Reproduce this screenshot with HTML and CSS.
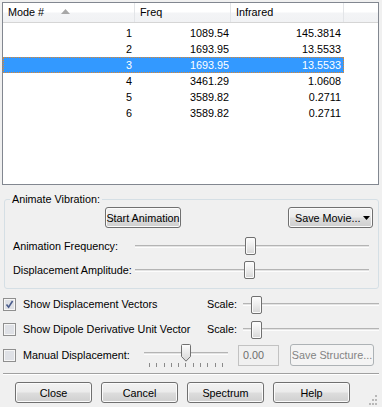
FILE: index.html
```html
<!DOCTYPE html>
<html lang="en">
<head>
    <meta charset="UTF-8">
    <title>Vibrations</title>
    <link rel="stylesheet" href="styles.css">
</head>
<body>
    <div class="dialog">
        <!-- Mode list -->
        <div class="list">
            <div class="list-head">
                <div class="head-cell c1">Mode # <svg class="sort" width="9" height="5" viewBox="0 0 9 5"><polygon points="0,5 9,5 4.5,0" fill="#a7a7a7"/></svg></div>
                <div class="head-cell c2">Freq</div>
                <div class="head-cell c3">Infrared</div>
                <div class="head-cell filler"></div>
            </div>
            <div class="list-body" id="mode-list"></div>
        </div>

        <!-- Animation group -->
        <fieldset class="group">
            <legend>Animate Vibration:</legend>
            <div class="anim-buttons">
                <button class="btn start-btn">Start Animation</button>
                <button class="btn movie-btn">Save Movie...<svg class="drop" width="7" height="4" viewBox="0 0 7 4"><polygon points="0,0 7,0 3.5,4" fill="#000"/></svg></button>
            </div>
            <div class="slider-row">
                <span class="slider-label">Animation Frequency:</span>
                <div class="slider">
                    <div class="track"></div>
                    <div class="thumb" style="left:110px"></div>
                </div>
            </div>
            <div class="slider-row">
                <span class="slider-label">Displacement Amplitude:</span>
                <div class="slider">
                    <div class="track"></div>
                    <div class="thumb" style="left:109px"></div>
                </div>
            </div>
        </fieldset>

        <!-- Display options -->
        <div class="options">
            <div class="opt-row">
                <svg class="check" width="13" height="13" viewBox="0 0 13 13">
                    <rect x="0.5" y="0.5" width="12" height="12" fill="#f6f6f6" stroke="#8f8f8f"/>
                    <rect x="2" y="2" width="9" height="9" fill="#dfe1e6"/>
                    <path d="M3.5 6.5 L5.6 9.2 L9.6 3" fill="none" stroke="#4a5c8c" stroke-width="1.6"/>
                </svg>
                <span class="opt-label">Show Displacement Vectors</span>
                <span class="scale-label">Scale:</span>
                <div class="slider scale">
                    <div class="track"></div>
                    <div class="thumb" style="left:8px"></div>
                </div>
            </div>
            <div class="opt-row">
                <svg class="check" width="13" height="13" viewBox="0 0 13 13">
                    <rect x="0.5" y="0.5" width="12" height="12" fill="#f6f6f6" stroke="#8f8f8f"/>
                    <rect x="2" y="2" width="9" height="9" fill="#dfe1e6"/>
                </svg>
                <span class="opt-label">Show Dipole Derivative Unit Vector</span>
                <span class="scale-label">Scale:</span>
                <div class="slider scale">
                    <div class="track"></div>
                    <div class="thumb" style="left:8px"></div>
                </div>
            </div>
            <div class="opt-row manual-row">
                <svg class="check" width="13" height="13" viewBox="0 0 13 13">
                    <rect x="0.5" y="0.5" width="12" height="12" fill="#f6f6f6" stroke="#8f8f8f"/>
                    <rect x="2" y="2" width="9" height="9" fill="#dfe1e6"/>
                </svg>
                <span class="manual-label">Manual Displacement:</span>
                <div class="tick-slider">
                    <div class="slider small">
                        <div class="track"></div>
                        <svg class="pointer" style="left:37px" width="10" height="18" viewBox="0 0 10 18">
                            <defs>
                                <linearGradient id="pg" x1="0" y1="0" x2="0" y2="1">
                                    <stop offset="0" stop-color="#fdfdfd"/>
                                    <stop offset="1" stop-color="#d6d6d6"/>
                                </linearGradient>
                            </defs>
                            <path d="M1.5 0.5 H8.5 Q9.5 0.5 9.5 1.5 V12.5 L5 17.2 L0.5 12.5 V1.5 Q0.5 0.5 1.5 0.5 Z" fill="url(#pg)" stroke="#707070"/>
                        </svg>
                    </div>
                    <div class="ticks">
                        <i></i><i></i><i></i><i></i><i></i><i></i><i></i><i></i><i></i><i></i><i></i>
                    </div>
                </div>
                <div class="textbox">0.00</div>
                <button class="btn disabled save-btn">Save Structure...</button>
            </div>
        </div>

        <div class="separator"></div>

        <!-- Dialog buttons -->
        <div class="actions">
            <button class="btn action">Close</button>
            <button class="btn action">Cancel</button>
            <button class="btn action">Spectrum</button>
            <button class="btn action">Help</button>
            <svg class="grip" width="11" height="11" viewBox="0 0 11 11" fill="#b8b8b8">
                <rect x="8" y="0" width="2" height="2"/>
                <rect x="5" y="4" width="2" height="2"/><rect x="8" y="4" width="2" height="2"/>
                <rect x="2" y="8" width="2" height="2"/><rect x="5" y="8" width="2" height="2"/><rect x="8" y="8" width="2" height="2"/>
            </svg>
        </div>
    </div>

    <script>
        // Normal modes (frequency, IR intensity)
        const modes = [
            { id: 1, freq: "1089.54", ir: "145.3814" },
            { id: 2, freq: "1693.95", ir: "13.5533" },
            { id: 3, freq: "1693.95", ir: "13.5533" },
            { id: 4, freq: "3461.29", ir: "1.0608" },
            { id: 5, freq: "3589.82", ir: "0.2711" },
            { id: 6, freq: "3589.82", ir: "0.2711" }
        ];
        const selected = 3;

        function renderModes() {
            const list = document.getElementById("mode-list");
            list.innerHTML = "";
            modes.forEach(mode => {
                const row = document.createElement("div");
                row.className = "list-row" + (mode.id === selected ? " selected" : "");
                row.innerHTML = `
                    <span class="cell c1">${mode.id}</span>
                    <span class="cell c2">${mode.freq}</span>
                    <span class="cell c3">${mode.ir}</span>
                `;
                list.appendChild(row);
            });
        }

        renderModes();
    </script>
</body>
</html>
```

FILE: styles.css
```css
/* Global */
* {
    box-sizing: border-box;
}

body {
    margin: 0;
    width: 382px;
    height: 407px;
    overflow: hidden;
    background-color: #f0f0f0;
    font-family: "Liberation Sans", Arial, sans-serif;
    font-size: 10.8px;
    line-height: 13px;
    color: #000;
}

.dialog {
    padding-top: 2px;
}

/* Mode list */
.list {
    margin-left: 2px;
    width: 377px;
    height: 183px;
    border: 1px solid #828790;
    background-color: #fff;
}

.list-head {
    display: flex;
    height: 20px;
    border-bottom: 1px solid #d5d5d5;
    background: linear-gradient(#ffffff 0%, #ffffff 45%, #f3f4f6 55%, #f1f2f4 100%);
}

.head-cell {
    display: flex;
    align-items: center;
    padding-left: 5px;
    border-right: 1px solid #e3e5e8;
    height: 19px;
}

.head-cell.filler {
    flex: 1;
    border-right: none;
}

.sort {
    margin-left: 17px;
    margin-top: -2px;
}

.c1 { width: 132px; }
.c2 { width: 96px; }
.c3 { width: 113px; }

.list-body {
    padding-top: 2px;
}

.list-row {
    display: flex;
    width: 341px;
    height: 16px;
    align-items: center;
}

.list-row .cell {
    text-align: right;
    padding-right: 3px;
}

.list-row .cell.c2 {
    padding-right: 2px;
}

.list-row.selected {
    background-color: #3399ff;
    color: #fff;
    outline: 1px dotted #e0862c;
    outline-offset: -1px;
}

/* Group box */
.group {
    margin: 8px 3px 0 4px;
    padding: 0 0 6px 0;
    min-width: 0;
    border: 1px solid #d5dfe5;
    border-radius: 3px;
}

.group legend {
    margin-left: 5px;
    padding: 0 2px;
    line-height: 13px;
}

.anim-buttons {
    display: flex;
    justify-content: space-between;
    margin-top: 1px;
    padding: 0 5px 0 100px;
}

.slider-row {
    display: flex;
    align-items: center;
    height: 24px;
    padding: 0 9px 0 8px;
}

.anim-buttons + .slider-row {
    margin-top: 6px;
}

.slider-label {
    width: 122px;
}

/* Sliders */
.slider {
    position: relative;
    flex: 1;
    height: 18px;
    display: flex;
    align-items: center;
}

.track {
    width: 100%;
    height: 3px;
    border-top: 1px solid #b4b4b4;
    border-bottom: 1px solid #fcfcfc;
    background-color: #e3e3e3;
}

.thumb {
    position: absolute;
    top: 0;
    width: 11px;
    height: 18px;
    border: 1px solid #707070;
    border-radius: 2px;
    background: linear-gradient(#fdfdfd 0%, #ececec 50%, #d6d6d6 100%);
    box-shadow: inset 0 0 0 1px #fbfbfb;
}

/* Buttons */
.btn {
    font-family: inherit;
    font-size: 10.8px;
    color: #000;
    height: 21px;
    padding: 0;
    white-space: nowrap;
    border: 1px solid #707070;
    border-radius: 3px;
    background: linear-gradient(#f2f2f2 0%, #ebebeb 48%, #dddddd 52%, #cfcfcf 100%);
    box-shadow: inset 0 0 0 1px #fbfbfb;
}

.start-btn {
    width: 76px;
}

.movie-btn {
    width: 85px;
    display: flex;
    align-items: center;
    padding-left: 6px;
}

.drop {
    margin-left: 3px;
}

.btn.disabled {
    color: #838383;
    border-color: #adb2b5;
    background: #f4f4f4;
    box-shadow: none;
}

/* Options */
.options {
    margin-top: 3px;
}

.opt-row {
    display: flex;
    align-items: center;
    height: 25px;
    padding-left: 3px;
}

.check {
    flex: none;
    margin-right: 7px;
}

.opt-label {
    width: 184px;
}

.scale-label {
    width: 36px;
}

.slider.scale {
    margin-right: 3px;
}

.manual-row {
    height: 26px;
}

.manual-label {
    width: 121px;
}

.tick-slider {
    width: 84px;
    display: flex;
    flex-direction: column;
    margin-top: 1px;
}

.slider.small {
    flex: none;
    height: 18px;
}

.pointer {
    position: absolute;
    top: 0;
}

.ticks {
    display: flex;
    justify-content: space-between;
    padding: 1px 5px 0 5px;
    height: 5px;
}

.ticks i {
    width: 1px;
    height: 4px;
    background-color: #8a8a8a;
}

.textbox {
    width: 41px;
    height: 21px;
    margin-left: 10px;
    padding: 3px 0 0 4px;
    border: 1px solid #c2c2c2;
    color: #6d6d6d;
    background-color: #f0f0f0;
}

.save-btn {
    width: 84px;
    height: 22px;
    margin-left: 11px;
}

/* Bottom */
.separator {
    margin: 5px 3px 0 3px;
    border-top: 1px solid #a0a0a0;
    border-bottom: 1px solid #ffffff;
}

.actions {
    display: flex;
    gap: 9px;
    margin-top: 7px;
    padding-left: 15px;
}

.btn.action {
    width: 77px;
}

.grip {
    margin-left: auto;
    margin-right: 4px;
    align-self: flex-end;
    margin-bottom: -3px;
}
```
